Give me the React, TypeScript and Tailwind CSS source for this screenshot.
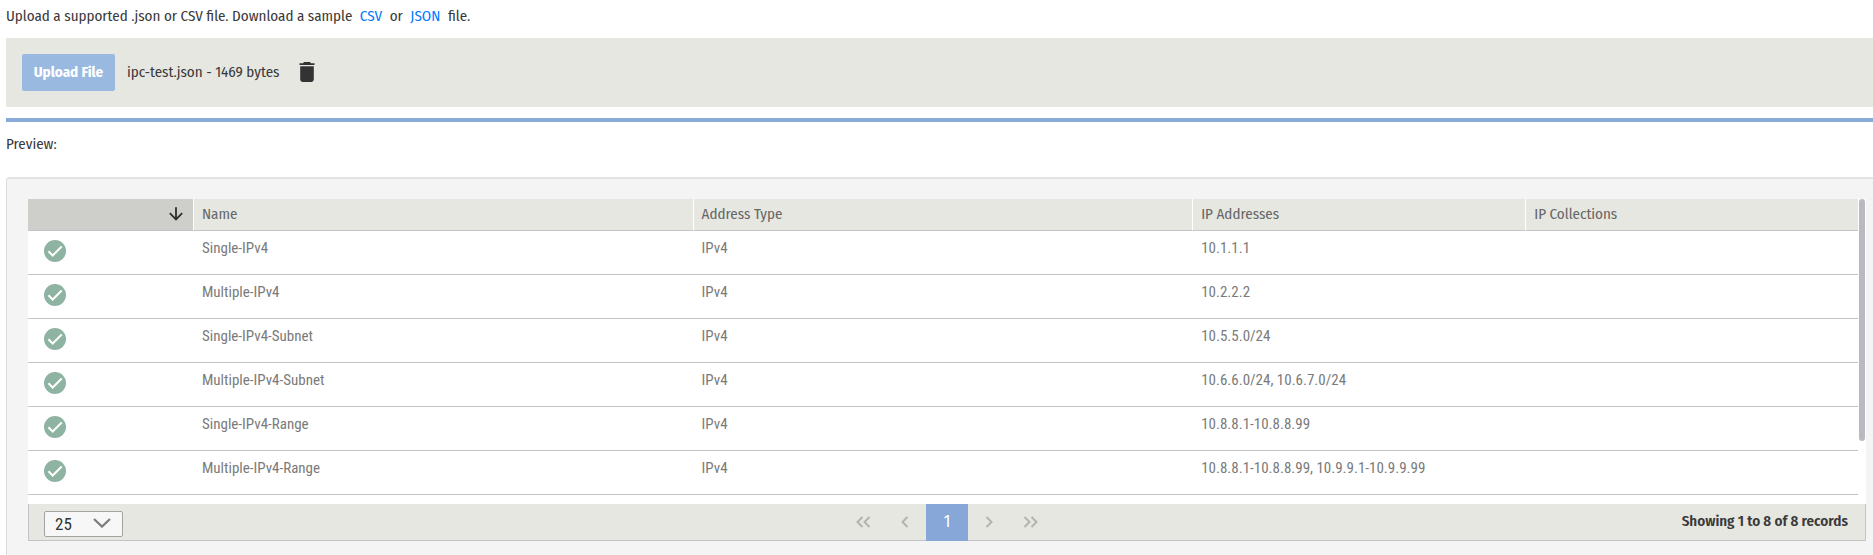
import type { ReactNode } from "react";

type Entry = { name: string; type: string; addresses: string; collections: string };

const entries: Entry[] = [
  { name: "Single-IPv4", type: "IPv4", addresses: "10.1.1.1", collections: "" },
  { name: "Multiple-IPv4", type: "IPv4", addresses: "10.2.2.2", collections: "" },
  { name: "Single-IPv4-Subnet", type: "IPv4", addresses: "10.5.5.0/24", collections: "" },
  { name: "Multiple-IPv4-Subnet", type: "IPv4", addresses: "10.6.6.0/24, 10.6.7.0/24", collections: "" },
  { name: "Single-IPv4-Range", type: "IPv4", addresses: "10.8.8.1-10.8.8.99", collections: "" },
  { name: "Multiple-IPv4-Range", type: "IPv4", addresses: "10.8.8.1-10.8.8.99, 10.9.9.1-10.9.9.99", collections: "" },
];

function TrashIcon() {
  return (
    <svg viewBox="0 0 16 20" className="h-5 w-4" fill="#333333" aria-hidden="true">
      <path d="M5 0h6l1 1.2h3.5v1.9H.5V1.2H4z" />
      <path d="M1.2 4.3h13.6v13.2a2.4 2.4 0 0 1-2.4 2.4H3.6a2.4 2.4 0 0 1-2.4-2.4z" />
    </svg>
  );
}

function CheckBadge() {
  return (
    <svg viewBox="0 0 22 22" className="block size-[22px]" role="img" aria-label="Valid">
      <circle cx="11" cy="11" r="11" fill="#8fb3a2" />
      <path d="M4.4 11.2l4.3 4.3 9-9" fill="none" stroke="#fff" strokeWidth="2" />
    </svg>
  );
}

function SortIcon() {
  return (
    <svg viewBox="0 0 14 14" className="ml-auto block size-[14px]" fill="none" stroke="#2e2e2e" strokeWidth="1.8" aria-hidden="true">
      <path d="M7 .2v12M.8 6.2L7 12.4l6.2-6.2" />
    </svg>
  );
}

function HeaderCell({ children }: { children: ReactNode }) {
  return (
    <th scope="col" className="border-b border-l border-b-[#c4c4c6] border-l-white pb-0.5 pl-2 text-left font-normal">
      {children}
    </th>
  );
}

function PageButton({ label, path }: { label: string; path: string }) {
  return (
    <button type="button" aria-label={label} className="flex w-[42px] items-center justify-center pb-0.5">
      <svg viewBox="0 0 16 12" className="h-3 w-4" fill="none" stroke="#b3b4b0" strokeWidth="2" aria-hidden="true">
        <path d={path} />
      </svg>
    </button>
  );
}

export default function App() {
  return (
    <main className="bg-white pl-[6px] font-['Fira_Sans_Condensed','Noto_Sans',sans-serif] text-[15px] leading-5 text-[#3a3a3a]">
      <p className="pt-[6px] pb-3">
        Upload a supported .json or CSV file. Download a sample{" "}
        <a href="#csv" className="mx-1 text-[#007bff]">CSV</a> or{" "}
        <a href="#json" className="mx-1 text-[#007bff]">JSON</a> file.
      </p>

      <section className="flex items-center bg-[#e6e7e1] p-4">
        <button type="button" className="h-[37px] w-[93px] rounded-[2px] bg-[#99b9e1] pb-0.5 font-bold text-white">
          Upload File
        </button>
        <span className="ml-3 pb-0.5">ipc-test.json - 1469 bytes</span>
        <button type="button" aria-label="Remove file" className="ml-5 pb-0.5">
          <TrashIcon />
        </button>
      </section>

      <hr className="mt-[11px] border-t-4 border-[#8aabd9]" />
      <h2 className="pt-3 pb-[23px]">Preview:</h2>

      <section className="rounded-tl-[4px] border-t-2 border-l border-t-[#e4e4e4] border-l-[#dcdcdc] bg-[#f4f4f4] pt-5 pr-[7px] pb-[14px] pl-[21px]">
        <div className="relative bg-white pr-2 pb-[9px]">
          <table className="w-full table-fixed border-separate border-spacing-0">
            <colgroup>
              <col className="w-[165px]" />
              <col className="w-[27.3%]" />
              <col className="w-[27.3%]" />
              <col className="w-[18.2%]" />
              <col />
            </colgroup>
            <thead>
              <tr className="h-8 bg-[#e6e7e1] text-[#666666]">
                <th scope="col" aria-label="Status" className="border-b border-[#c4c4c6] bg-[#cecfca] pr-[10px] pb-0.5">
                  <SortIcon />
                </th>
                <HeaderCell>Name</HeaderCell>
                <HeaderCell>Address Type</HeaderCell>
                <HeaderCell>IP Addresses</HeaderCell>
                <HeaderCell>IP Collections</HeaderCell>
              </tr>
            </thead>
            <tbody className="font-['Roboto_Condensed','Roboto',sans-serif] text-[#7a7a7a]">
              {entries.map((e) => (
                <tr key={e.name} className="h-11 align-top">
                  <td className="border-b border-[#c4c4c6] pt-[9px] pl-4"><CheckBadge /></td>
                  <td className="border-b border-[#c4c4c6] pt-[7px] pl-[9px]">{e.name}</td>
                  <td className="border-b border-[#c4c4c6] pt-[7px] pl-[9px]">{e.type}</td>
                  <td className="border-b border-[#c4c4c6] pt-[7px] pl-[9px]">{e.addresses}</td>
                  <td className="border-b border-[#c4c4c6] pt-[7px] pl-[9px]">{e.collections}</td>
                </tr>
              ))}
            </tbody>
          </table>
          <div className="absolute top-0 right-px h-[242px] w-[6px] rounded-full bg-[#b9b9c1]" />
        </div>

        <footer className="grid grid-cols-[1fr_auto_1fr] border-x border-b border-[#c4c4c6] bg-[#e6e7e1]">
          <div className="pt-[7px] pl-[15px]">
            <div className="relative w-[79px]">
              <select
                aria-label="Rows per page"
                defaultValue="25"
                className="block h-[26px] w-full appearance-none rounded-[2px] border border-[#a3a3a3] bg-[#f7f7f7] pl-[10px] font-['Roboto_Condensed','Roboto',sans-serif] text-[17px] text-[#333333]"
              >
                <option>25</option>
              </select>
              <svg viewBox="0 0 18 10" className="pointer-events-none absolute top-[7px] right-[12px] h-[10px] w-[18px]" fill="none" stroke="#7c7c7c" strokeWidth="2.2" aria-hidden="true">
                <path d="M1 1l8 7.6L17 1" />
              </svg>
            </div>
          </div>
          <nav aria-label="Pagination" className="-mb-px flex h-[37px]">
            <PageButton label="First page" path="M7.5 1l-5 5 5 5M14.5 1l-5 5 5 5" />
            <PageButton label="Previous page" path="M10.5 1l-5 5 5 5" />
            <button type="button" aria-current="page" className="w-[42px] bg-[#86a7d7] pb-0.5 text-[17px] text-white">1</button>
            <PageButton label="Next page" path="M5.5 1l5 5-5 5" />
            <PageButton label="Last page" path="M1.5 1l5 5-5 5M8.5 1l5 5-5 5" />
          </nav>
          <p className="pt-[7px] pr-[17px] text-right font-semibold">Showing 1 to 8 of 8 records</p>
        </footer>
      </section>
    </main>
  );
}
